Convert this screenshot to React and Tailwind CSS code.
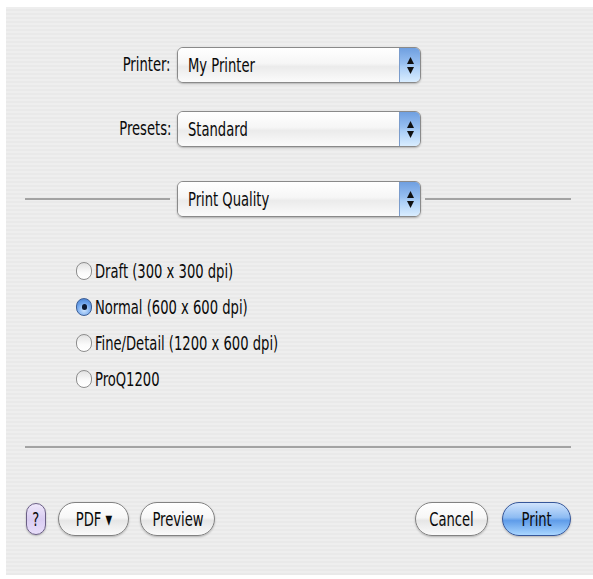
import React from 'react';

const txt = "inline-block whitespace-nowrap font-['DejaVu_Sans_Condensed','DejaVu_Sans',sans-serif] text-[20px] leading-[22px] text-[#0a0a0a] scale-x-[0.73]";

// Aqua style popup menu
const Popup = ({ label }) => (
  <div className="w-[244px] h-[36px] flex rounded-[6px] border border-[#8a8a8a] shadow-[0_1px_2px_rgba(0,0,0,0.25)] overflow-hidden">
    <div className="flex-1 flex items-center pl-[10px] bg-[linear-gradient(to_bottom,#ffffff_0%,#f6f6f6_45%,#ebebeb_55%,#fbfbfb_100%)]">
      <span className={`${txt} origin-left`}>{label}</span>
    </div>
    <div className="w-[21px] flex flex-col items-center justify-center gap-[3px] border-l border-[#7a9ccc] bg-[linear-gradient(to_bottom,#6f9fe0_0%,#97bff1_45%,#a9cdf6_55%,#d9edff_100%)]">
      <svg width="7" height="7" viewBox="0 0 7 7"><path d="M3.5 0L7 7H0z" fill="#111" /></svg>
      <svg width="7" height="7" viewBox="0 0 7 7"><path d="M0 0h7L3.5 7z" fill="#111" /></svg>
    </div>
  </div>
);

const Radio = ({ checked, label }) => (
  <div className="h-[36px] flex items-center">
    {checked ? (
      <div className="w-[16px] h-[18px] rounded-full border border-[#3d5f96] bg-[radial-gradient(circle_at_50%_70%,#cfe6ff_0%,#6ea4ec_55%,#3f78cc_100%)] flex items-center justify-center">
        <div className="w-[5px] h-[6px] rounded-full bg-[#0d1a33]" />
      </div>
    ) : (
      <div className="w-[16px] h-[18px] rounded-full border border-[#8d8d8d] bg-[linear-gradient(to_bottom,#e2e2e2_0%,#fbfbfb_60%,#ffffff_100%)]" />
    )}
    <span className={`${txt} origin-left ml-[3px]`}>{label}</span>
  </div>
);

const Button = ({ children, blue, className = '' }) => (
  <div
    className={`h-[34px] rounded-full border flex items-center justify-center shadow-[0_1px_2px_rgba(0,0,0,0.25)] ${
      blue
        ? 'border-[#36579a] bg-[linear-gradient(to_bottom,#cfe3fc_0%,#8ebcf3_45%,#5f9ce9_55%,#a9d6ff_100%)]'
        : 'border-[#828282] bg-[linear-gradient(to_bottom,#ffffff_0%,#f7f7f7_45%,#e6e6e6_55%,#fafafa_100%)]'
    } ${className}`}
  >
    <span className={txt}>{children}</span>
  </div>
);

export default function App() {
  return (
    <div className="w-[593px] h-[579px] bg-white pt-[7px] pl-[6px] pb-[4px]">
      <div className="h-full flex flex-col bg-[repeating-linear-gradient(to_bottom,#eeeeee_0px,#eeeeee_2px,#e9e9e9_2px,#e9e9e9_4px)]">
        {/* Printer / Presets */}
        <div className="mt-[40px] flex flex-col gap-[28px]">
          <div className="flex items-center">
            <div className="w-[165px] text-right"><span className={`${txt} origin-right`}>Printer:</span></div>
            <div className="ml-[6px]"><Popup label="My Printer" /></div>
          </div>
          <div className="flex items-center">
            <div className="w-[165px] text-right"><span className={`${txt} origin-right`}>Presets:</span></div>
            <div className="ml-[6px]"><Popup label="Standard" /></div>
          </div>
        </div>

        {/* Panel selector */}
        <div className="mt-[34px] flex items-center pl-[19px]">
          <div className="w-[145px] h-[2px] bg-[#a3a3a3]" />
          <div className="ml-[7px]"><Popup label="Print Quality" /></div>
          <div className="ml-[4px] w-[146px] h-[2px] bg-[#a3a3a3]" />
        </div>

        {/* Quality options */}
        <div className="mt-[36px] pl-[70px] flex flex-col">
          <Radio label="Draft (300 x 300 dpi)" />
          <Radio checked label="Normal (600 x 600 dpi)" />
          <Radio label="Fine/Detail (1200 x 600 dpi)" />
          <Radio label="ProQ1200" />
        </div>

        <div className="mt-[49px] ml-[19px] w-[546px] h-[2px] bg-[#a3a3a3]" />

        {/* Buttons */}
        <div className="mt-[54px] flex items-center pl-[20px] pr-[22px]">
          <div className="w-[20px] h-[32px] rounded-full border border-[#6b5f86] bg-[linear-gradient(to_bottom,#efe8fb_0%,#d9ccf1_50%,#e8defa_100%)] flex items-center justify-center shadow-[0_1px_2px_rgba(0,0,0,0.25)]">
            <span className={txt}>?</span>
          </div>
          <Button className="ml-[12px] w-[71px]">PDF ▾</Button>
          <Button className="ml-[11px] w-[75px]">Preview</Button>
          <Button className="ml-auto w-[73px]">Cancel</Button>
          <Button blue className="ml-[14px] w-[69px]">Print</Button>
        </div>
      </div>
    </div>
  );
}
